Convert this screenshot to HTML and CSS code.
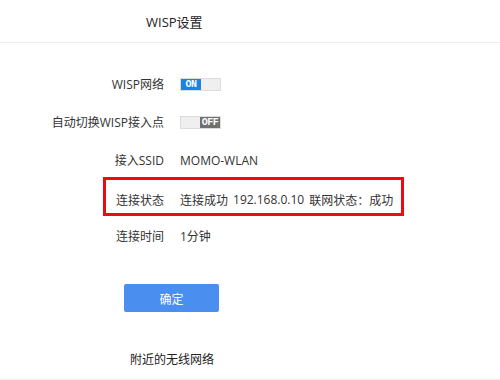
FILE: index.html
```html
<!DOCTYPE html>
<html lang="zh-CN">
<head>
    <meta charset="UTF-8">
    <title>WISP设置</title>
    <link rel="stylesheet" href="styles.css">
</head>
<body>
    <div class="panel-header">
        <h1 class="panel-title">WISP设置</h1>
    </div>

    <div class="settings">
        <div class="row">
            <div class="row-label">WISP网络</div>
            <div class="row-value">
                <span class="switch on"><span class="switch-knob">ON</span></span>
            </div>
        </div>
        <div class="row">
            <div class="row-label">自动切换WISP接入点</div>
            <div class="row-value">
                <span class="switch off"><span class="switch-knob">OFF</span></span>
            </div>
        </div>
        <div class="row">
            <div class="row-label">接入SSID</div>
            <div class="row-value">MOMO-WLAN</div>
        </div>
        <div class="row marked">
            <div class="row-label">连接状态</div>
            <div class="row-value">
                <span class="part">连接成功</span>
                <span class="part">192.168.0.10</span>
                <span class="part">联网状态：成功</span>
            </div>
        </div>
        <div class="row">
            <div class="row-label">连接时间</div>
            <div class="row-value">1分钟</div>
        </div>

        <button class="btn-ok" type="button">确定</button>
    </div>

    <div class="nearby">
        <h2 class="nearby-title">附近的无线网络</h2>
    </div>
</body>
</html>
```

FILE: styles.css
```css
body {
    margin: 0;
    font-family: "Open Sans", "Noto Sans CJK SC", sans-serif;
    font-size: 12px;
    color: #333;
    background: #fff;
}

.panel-header {
    height: 42px;
    border-bottom: 1px solid #ececec;
    display: flex;
    align-items: center;
}

.panel-title {
    margin: 0 0 0 146px;
    font-size: 13px;
    font-weight: normal;
    color: #222;
}

.settings {
    padding-top: 22px;
    display: flex;
    flex-direction: column;
}

.row {
    display: grid;
    grid-template-columns: 164px auto;
    column-gap: 16px;
    align-items: center;
    height: 38px;
}

.row-label {
    text-align: right;
}

.row-value {
    display: flex;
    align-items: center;
}

.row.marked {
    position: relative;
    padding-top: 3px;
    box-sizing: border-box;
}

.row.marked::after {
    content: "";
    position: absolute;
    left: 103px;
    top: -2px;
    width: 301px;
    height: 39px;
    border: 3px solid #ee0a12;
    box-sizing: border-box;
}

.part {
    margin-right: 5px;
}

.switch {
    display: flex;
    width: 41px;
    height: 13px;
    background: #efefef;
    border: 1px solid #dcdcdc;
    box-sizing: border-box;
}

.switch.off {
    justify-content: flex-end;
}

.switch-knob {
    width: 20px;
    height: 100%;
    display: flex;
    align-items: center;
    justify-content: center;
    font-family: "Liberation Mono", monospace;
    font-size: 10px;
    font-weight: bold;
    letter-spacing: -0.5px;
    color: #fff;
}

.switch.on .switch-knob {
    background: #1a84e6;
}

.switch.off .switch-knob {
    background: #707070;
}

.btn-ok {
    margin: 29px 0 0 124px;
    width: 95px;
    height: 28px;
    border: none;
    border-radius: 2px;
    background: #4a8ef0;
    color: #fff;
    font-family: "Noto Sans CJK SC", sans-serif;
    font-size: 12px;
    cursor: pointer;
}

.nearby {
    margin-top: 40px;
    height: 27px;
    border-bottom: 1px solid #ececec;
}

.nearby-title {
    margin: 0 0 0 130px;
    font-size: 12px;
    font-weight: normal;
    color: #222;
    line-height: 16px;
}
```
